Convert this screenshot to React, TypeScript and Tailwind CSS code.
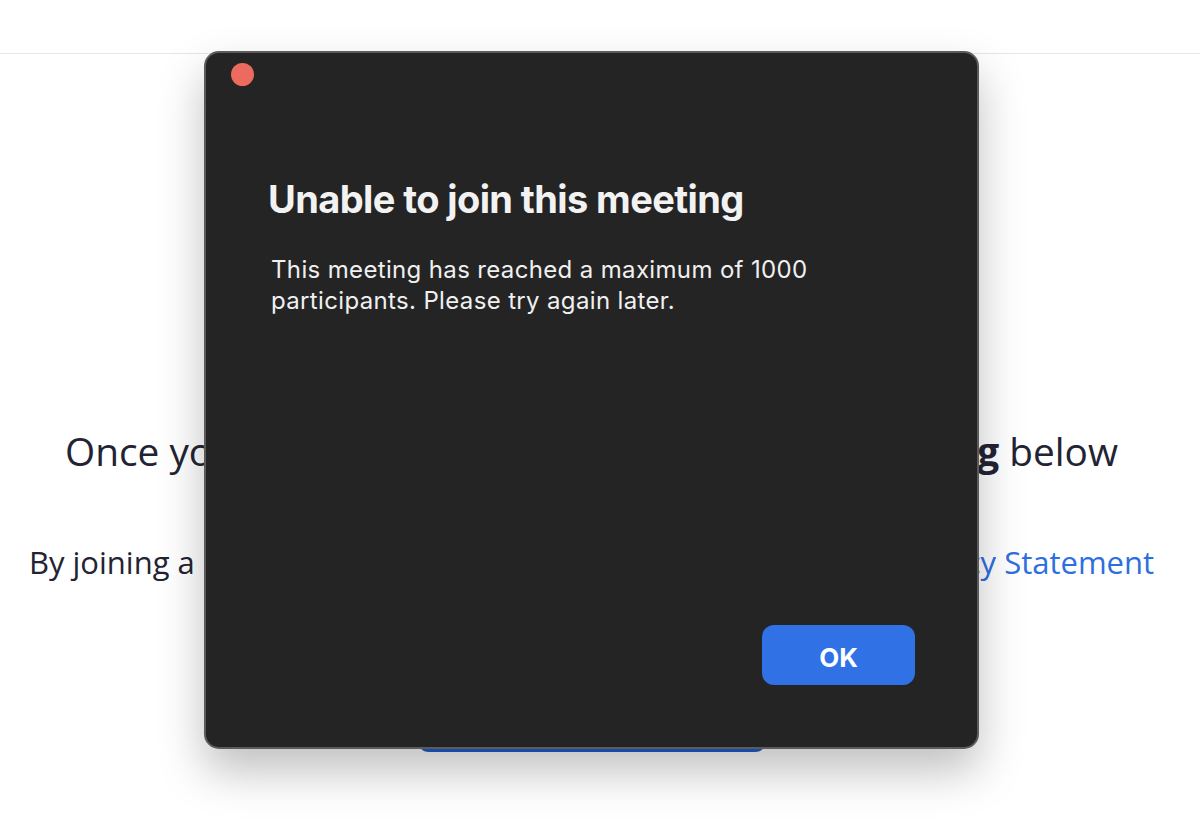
import React from "react";

export default function App() {
  return (
    <div className="relative h-[831px] w-[1200px] overflow-hidden bg-white font-['Open_Sans',sans-serif] text-[#232333]">
      {/* page behind the dialog */}
      <header className="h-[54px] border-b border-[#e6e6e6] bg-white" />
      <main className="flex w-[1183px] flex-col items-center">
        <p className="mt-[372px] text-[38.8px] leading-[50px] whitespace-nowrap">
          Once you install Zoom Client, click <b>Launch Meeting</b> below
        </p>
        <p className="mt-[66px] text-[31px] leading-[40px] whitespace-nowrap">
          By joining a meeting, you agree to our{" "}
          <a className="text-[#2d6fe0]">Terms of Service</a> and{" "}
          <a className="text-[#2d6fe0]">Privacy Statement</a>
        </p>
        <button className="mt-[90px] h-[80px] w-[350px] rounded-xl bg-[#1f5fd0] text-[24px] font-semibold text-white">
          Launch Meeting
        </button>
      </main>

      {/* dialog */}
      <div className="absolute left-[204px] top-[51px] flex h-[698px] w-[775px] flex-col rounded-[15px] border-2 border-[#5b5b5b] bg-[#242424] shadow-[0_22px_45px_rgba(0,0,0,0.25)] font-['Inter',sans-serif]">
        <div className="ml-[25px] mt-[10px] h-[23px] w-[23px] rounded-full bg-[#ed6a5e]" />
        <h1 className="ml-[62px] mt-[90px] text-[38px] font-bold leading-[46px] tracking-[-0.6px] text-[#f2f2f2]">
          Unable to join this meeting
        </h1>
        <p className="ml-[65px] mt-[32px] w-[590px] text-[24px] leading-[31px] tracking-[0.35px] text-[#f0f0f0]">
          This meeting has reached a maximum of 1000 participants. Please try again later.
        </p>
        <div className="mt-auto mb-[62px] mr-[62px] flex justify-end">
          <button className="h-[60px] w-[153px] rounded-[12px] bg-[#3071e5] pt-[4px] text-[26px] font-bold text-white">
            OK
          </button>
        </div>
      </div>
    </div>
  );
}
